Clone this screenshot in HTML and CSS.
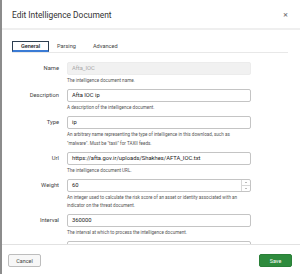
FILE: index.html
```html
<!DOCTYPE html>
<html lang="en">
<head>
    <meta charset="UTF-8">
    <title>Edit Intelligence Document</title>
    <link rel="stylesheet" href="styles.css">
</head>
<body>
    <div class="modal">
        <div class="modal-header">
            <span class="modal-title">Edit Intelligence Document</span>
            <span class="close">&#x2715;</span>
        </div>
        <div class="modal-body">
            <div class="tabs">
                <span class="tab active">General</span>
                <span class="tab">Parsing</span>
                <span class="tab">Advanced</span>
            </div>
            <div class="form">
                <div class="row">
                    <label>Name</label>
                    <div class="field">
                        <div class="input disabled">Afta_IOC</div>
                        <div class="help">The intelligence document name.</div>
                    </div>
                </div>
                <div class="row">
                    <label>Description</label>
                    <div class="field">
                        <div class="input">Afta IOC ip</div>
                        <div class="help">A description of the intelligence document.</div>
                    </div>
                </div>
                <div class="row">
                    <label>Type</label>
                    <div class="field">
                        <div class="input">ip</div>
                        <div class="help">An arbitrary name representing the type of intelligence in this download, such as "malware". Must be "taxii" for TAXII feeds.</div>
                    </div>
                </div>
                <div class="row">
                    <label>Url</label>
                    <div class="field">
                        <div class="input">https://afta.gov.ir/uploads/Shakhes/AFTA_IOC.txt</div>
                        <div class="help">The intelligence document URL.</div>
                    </div>
                </div>
                <div class="row">
                    <label>Weight</label>
                    <div class="field">
                        <div class="input number">
                            <span class="value">60</span>
                            <span class="spinner">
                                <span class="arrow up"></span>
                                <span class="arrow down"></span>
                            </span>
                        </div>
                        <div class="help">An integer used to calculate the risk score of an asset or identity associated with an indicator on the threat document.</div>
                    </div>
                </div>
                <div class="row">
                    <label>Interval</label>
                    <div class="field">
                        <div class="input">360000</div>
                        <div class="help">The interval at which to process the intelligence document.</div>
                    </div>
                </div>
                <div class="row">
                    <label></label>
                    <div class="field">
                        <div class="input"></div>
                    </div>
                </div>
            </div>
        </div>
        <div class="modal-footer">
            <button class="btn cancel">Cancel</button>
            <button class="btn save">Save</button>
        </div>
    </div>
</body>
</html>
```

FILE: styles.css
```css
html, body {
    margin: 0;
    height: 100%;
}
body {
    background: #8c8c8c;
    font-family: Roboto, "Noto Sans", sans-serif;
    color: #333;
    overflow: hidden;
}
.modal {
    margin-left: 2px;
    height: 274px;
    background: #fff;
    display: flex;
    flex-direction: column;
}
.modal-header {
    height: 28px;
    border-bottom: 2px solid #efefef;
    display: flex;
    align-items: center;
    justify-content: space-between;
    padding: 0 10px;
    flex-shrink: 0;
}
.modal-title {
    font-size: 8.4px;
    color: #333;
    padding-top: 1px;
}
.close {
    font-size: 6px;
    color: #777;
    font-weight: bold;
    padding-right: 2px;
}
.modal-body {
    flex: 1;
    overflow: hidden;
    padding: 11px 10px 0 10px;
}
.tabs {
    display: flex;
    border-bottom: 1px solid #e8e8e8;
    height: 11px;
    width: 276px;
}
.tab {
    font-size: 5.6px;
    color: #444;
    height: 11px;
    line-height: 11px;
    padding: 0 8px;
    box-sizing: border-box;
}
.tab:nth-child(3) {
    padding-left: 9px;
}
.tab.active {
    border: 1px solid #2c3e50;
    border-bottom: 2px solid #3a7bd5;
    line-height: 9px;
    color: #222;
    font-weight: 500;
    width: 37px;
    text-align: center;
    padding: 0;
}
.form {
    margin-top: 9px;
}
.row {
    display: flex;
    gap: 8px;
    margin-bottom: 3.5px;
}
.row label {
    width: 47px;
    flex-shrink: 0;
    text-align: right;
    font-size: 5.8px;
    line-height: 13px;
    color: #444;
}
.field {
    width: 184px;
}
.input {
    height: 13px;
    box-sizing: border-box;
    border: 1px solid #c4c4c4;
    border-radius: 2px;
    padding: 0 4px;
    font-size: 5.8px;
    line-height: 11px;
    color: #222;
    white-space: nowrap;
    overflow: hidden;
}
.input.disabled {
    background: #f1f1f1;
    border-color: #ececec;
    color: #a8a8a8;
}
.input.number {
    display: flex;
    justify-content: space-between;
    padding-right: 0;
}
.spinner {
    width: 8px;
    display: flex;
    flex-direction: column;
    border-left: 1px solid #d8d8d8;
}
.arrow {
    flex: 1;
    display: flex;
    align-items: center;
    justify-content: center;
}
.arrow.up {
    border-bottom: 1px solid #d8d8d8;
}
.arrow::before {
    content: "";
    border-left: 1.5px solid transparent;
    border-right: 1.5px solid transparent;
}
.arrow.up::before {
    border-bottom: 1.5px solid #777;
}
.arrow.down::before {
    border-top: 1.5px solid #777;
}
.help {
    font-size: 4.6px;
    line-height: 8.5px;
    margin-top: 2px;
    color: #555;
}
.modal-footer {
    flex-shrink: 0;
    height: 30px;
    border-top: 1px solid #e2e2e2;
    display: flex;
    align-items: flex-start;
    justify-content: space-between;
    padding: 9px 8px 0 6px;
    box-sizing: border-box;
}
.btn {
    height: 13px;
    width: 33px;
    font-family: Roboto, "Noto Sans", sans-serif;
    font-size: 5.4px;
    border-radius: 2px;
    padding: 0;
    cursor: pointer;
}
.btn.cancel {
    background: #f7f7f7;
    border: 1px solid #bdbdbd;
    color: #444;
}
.btn.save {
    background: #2e8b3d;
    border: 1px solid #2a7f38;
    color: #fff;
}
```
